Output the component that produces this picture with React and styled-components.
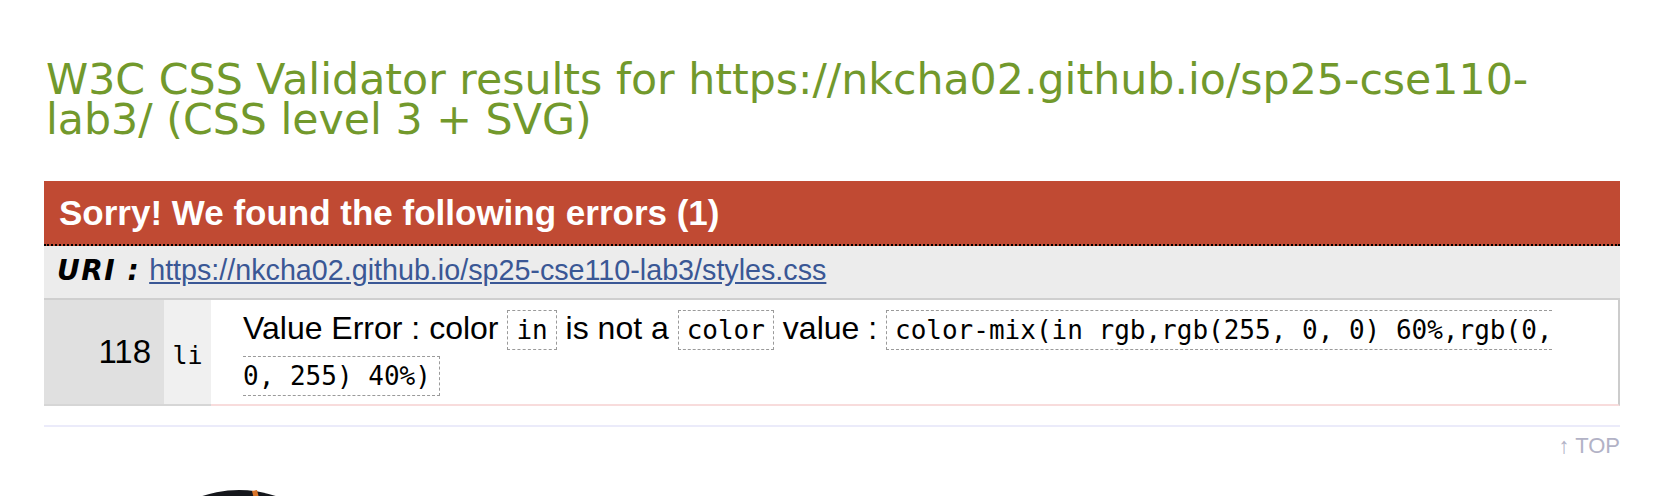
import React from "react";
import styled, { createGlobalStyle } from "styled-components";

const GlobalStyle = createGlobalStyle`
  html, body {
    margin: 0;
    padding: 0;
    background: #fff;
  }
  body {
    font-family: "Liberation Sans", Arial, sans-serif;
    color: #000;
  }
`;

const Page = styled.div`
  padding: 59px 44px 0 44px;
  height: 496px;
  overflow: hidden;
  box-sizing: border-box;
`;

const Title = styled.h2`
  margin: 0 0 42px 0;
  font-family: "DejaVu Sans", sans-serif;
  font-weight: normal;
  font-size: 42.7px;
  line-height: 40px;
  color: #72992c;
  padding-left: 2px;
`;

const ErrorBox = styled.div`
  display: flex;
  flex-direction: column;
`;

const ErrorHeader = styled.h3`
  margin: 0;
  height: 63px;
  display: flex;
  align-items: center;
  padding-left: 15px;
  background: #c04a33;
  border-bottom: 2px dotted #000;
  color: #fff;
  font-family: "Liberation Sans", Arial, sans-serif;
  font-weight: bold;
  font-size: 35px;
`;

const UriRow = styled.div`
  height: 54px;
  display: flex;
  align-items: center;
  gap: 9px;
  padding: 0 0 3px 13px;
  box-sizing: border-box;
  background: #ececec;
  border-bottom: 2px solid #cfcfcf;
`;

const UriLabel = styled.span`
  font-family: "DejaVu Sans", sans-serif;
  font-weight: bold;
  font-style: italic;
  font-size: 28px;
  letter-spacing: 1.5px;
`;

const UriLink = styled.a`
  font-family: "Liberation Sans", Arial, sans-serif;
  font-size: 28.7px;
  color: #3a5795;
  text-decoration: underline;
`;

const ErrorRow = styled.div`
  display: grid;
  grid-template-columns: 120px 47px 1fr;
`;

const Cell = styled.div`
  display: flex;
  align-items: center;
  background: ${(p) => p.bg};
  border-bottom: 2px solid #d6d6d6;
`;

const LineNum = styled(Cell)`
  justify-content: flex-end;
  padding-right: 13px;
  font-family: "Liberation Sans", Arial, sans-serif;
  font-size: 33px;
`;

const Context = styled(Cell)`
  justify-content: center;
  padding-top: 6px;
  font-family: "DejaVu Sans Mono", monospace;
  font-size: 25px;
`;

const Message = styled.div`
  padding: 6px 50px 6px 32px;
  background: #fff;
  border-right: 2px solid #cccccc;
  border-bottom: 2px solid #f8dcdc;
  font-family: "Liberation Sans", Arial, sans-serif;
  font-size: 32px;
  line-height: 44px;
`;

const Code = styled.span`
  font-family: "DejaVu Sans Mono", monospace;
  font-size: 26px;
  padding: 4px 8px;
  border: 1.5px dashed #9a9a9a;
`;

const Rule = styled.div`
  margin-top: 19px;
  height: 2px;
  background: #ebebfa;
`;

const TopRow = styled.div`
  display: flex;
  justify-content: flex-end;
  padding-top: 6px;
`;

const TopLink = styled.a`
  font-family: "Liberation Sans", Arial, sans-serif;
  font-size: 22px;
  color: #b2b2c6;
  text-decoration: none;
`;

const Avatar = styled.div`
  margin: 31px 0 0 80px;
  width: 230px;
`;

export default function App() {
  return (
    <>
      <GlobalStyle />
      <Page>
        <Title>
          W3C CSS Validator results for https://nkcha02.github.io/sp25-cse110-lab3/ (CSS level 3 + SVG)
        </Title>
        <ErrorBox>
          <ErrorHeader>Sorry! We found the following errors (1)</ErrorHeader>
          <UriRow>
            <UriLabel>URI :</UriLabel>
            <UriLink href="#">https://nkcha02.github.io/sp25-cse110-lab3/styles.css</UriLink>
          </UriRow>
          <ErrorRow>
            <LineNum bg="#e0e0e0">118</LineNum>
            <Context bg="#f0f0f0">li</Context>
            <Message>
              Value Error : color <Code>in</Code> is not a <Code>color</Code> value :{" "}
              <Code>color-mix(in rgb,rgb(255, 0, 0) 60%,rgb(0, 0, 255) 40%)</Code>
            </Message>
          </ErrorRow>
        </ErrorBox>
        <Rule />
        <TopRow>
          <TopLink href="#">↑ TOP</TopLink>
        </TopRow>
        <Avatar>
          <svg width="230" height="230" viewBox="0 0 230 230">
            <circle cx="115" cy="115" r="115" fill="#15171c" />
            <path d="M128 1 L133 0 L136 12 L131 13 Z" fill="#d8742a" />
          </svg>
        </Avatar>
      </Page>
    </>
  );
}
